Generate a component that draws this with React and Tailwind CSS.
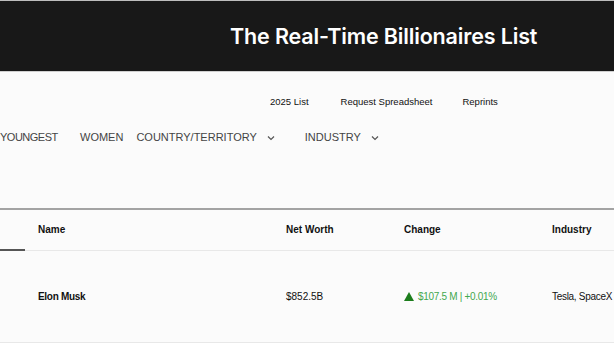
import React from 'react';

const Chevron = () => (
  <svg width="8" height="6" viewBox="0 0 8 6" className="ml-[10px] mt-[1px]">
    <path d="M1 1.5 L4 4.5 L7 1.5" fill="none" stroke="#555" strokeWidth="1.2" />
  </svg>
);

const App = () => {
  return (
    <div className="w-[614px] h-[343px] overflow-hidden bg-[#fbfbfb] font-['Liberation_Sans',Arial,sans-serif]">
      {/* Header */}
      <header className="h-[72px] bg-[#181818] border-t border-[#bdbdbd] border-b border-b-[#cfcfcf] flex items-center">
        <h1 className="pl-[230px] text-[21.5px] font-semibold text-white font-['Inter',sans-serif] tracking-[-0.15px]">
          The Real-Time Billionaires List
        </h1>
      </header>

      {/* Secondary links */}
      <div className="flex pl-[270px] pt-[23px] text-[9.5px] text-[#111]">
        <span>2025 List</span>
        <span className="ml-[32px]">Request Spreadsheet</span>
        <span className="ml-[30px]">Reprints</span>
      </div>

      {/* Nav */}
      <nav className="flex items-center mt-[20px] text-[11px] text-[#444] whitespace-nowrap">
        <span className="w-[56px] tracking-[-0.5px]">YOUNGEST</span>
        <span className="ml-[24px]">WOMEN</span>
        <span className="ml-[13px]">COUNTRY/TERRITORY</span>
        <Chevron />
        <span className="ml-[30px]">INDUSTRY</span>
        <Chevron />
      </nav>

      {/* Table */}
      <div className="mt-[62px] border-t-2 border-[#a3a3a3]">
        <div className="grid grid-cols-[38px_248px_118px_148px_1fr] h-[41px] border-b border-[#e8e8e8] text-[10px] font-bold text-[#111] items-center">
          <div className="h-full relative">
            <div className="absolute left-0 bottom-[-1px] w-[25px] h-[2px] bg-[#555]"></div>
          </div>
          <div>Name</div>
          <div>Net Worth</div>
          <div>Change</div>
          <div className="whitespace-nowrap">Industry</div>
        </div>
        <div className="grid grid-cols-[38px_248px_118px_148px_1fr] h-[92px] border-b border-[#e8e8e8] text-[10px] text-[#111] items-center">
          <div></div>
          <div className="font-bold tracking-[-0.3px]">Elon Musk</div>
          <div>$852.5B</div>
          <div className="flex items-center text-[#43a84f] whitespace-nowrap text-[10px] tracking-[-0.3px]">
            <svg width="10" height="9" viewBox="0 0 10 9" className="mr-[4px]">
              <path d="M5 0 L10 9 L0 9 Z" fill="#1c7d1c" />
            </svg>
            $107.5 M | +0.01%
          </div>
          <div className="whitespace-nowrap tracking-[-0.3px]">Tesla, SpaceX</div>
        </div>
      </div>
    </div>
  );
};

export default App;
